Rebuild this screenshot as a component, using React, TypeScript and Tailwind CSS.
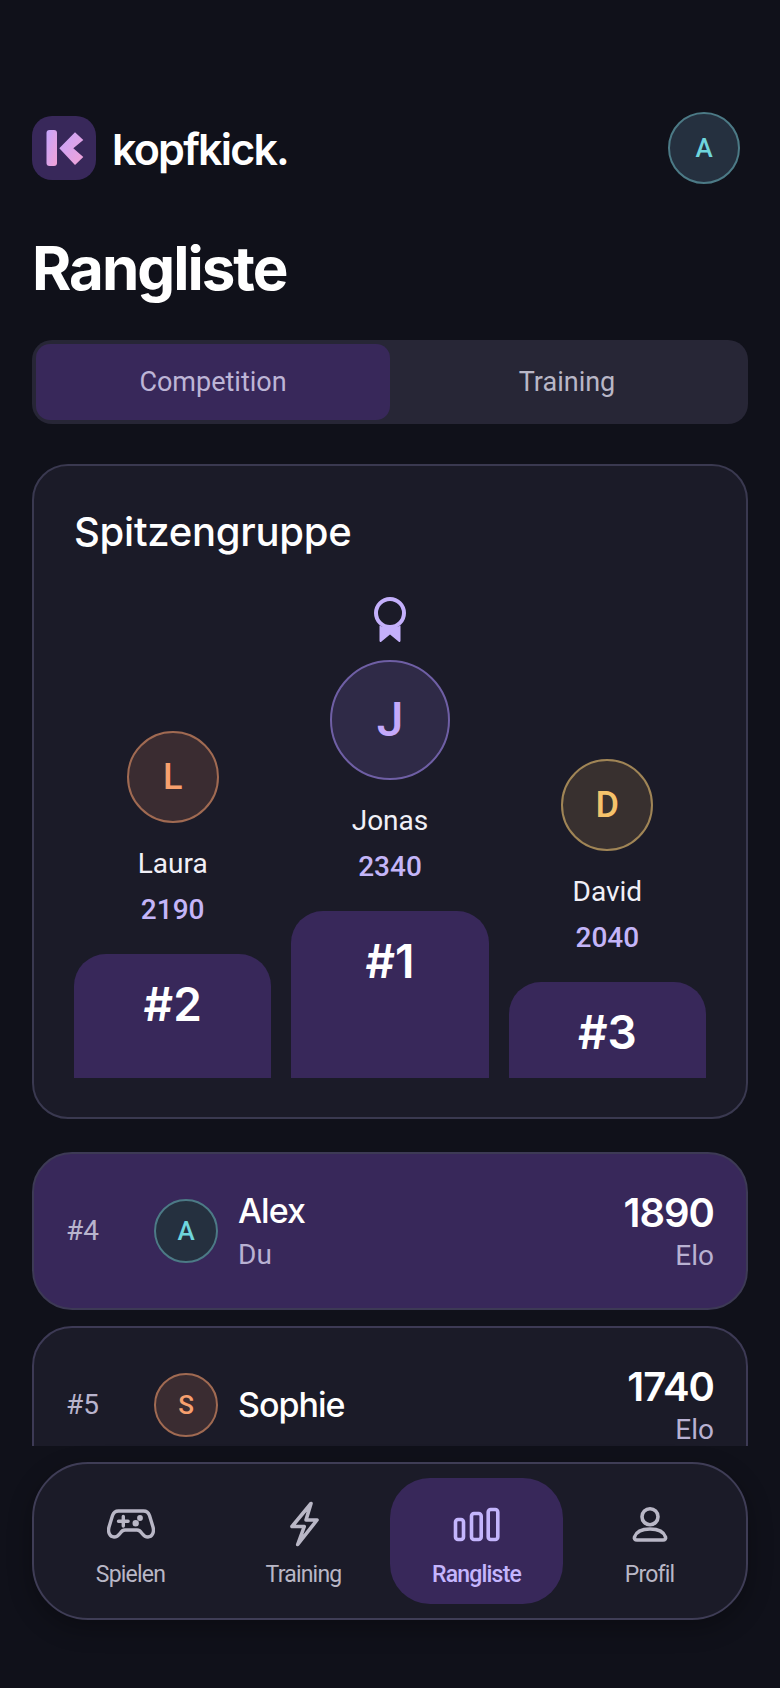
const display = { fontFamily: 'Inter, "Liberation Sans", sans-serif' };

interface Tone {
  ring: string;
}

const teal: Tone = { ring: 'bg-[#25303f] border-[#4c7a86] text-[#6fd5dc]' };
const orange: Tone = { ring: 'bg-[#3a2c31] border-[#a06a52] text-[#f7a06e]' };
const amber: Tone = { ring: 'bg-[#38302f] border-[#a08556] text-[#f5c26b]' };
const violet: Tone = { ring: 'bg-[#2f2a47] border-[#6f5fa5] text-[#c4a9fb]' };

function Avatar({ letter, tone, className }: { letter: string; tone: Tone; className: string }) {
  return (
    <div className={`flex shrink-0 items-center justify-center rounded-full border-2 font-medium ${tone.ring} ${className}`}>
      {letter}
    </div>
  );
}

function Logo() {
  return (
    <svg width="64" height="64" viewBox="0 0 64 64" className="shrink-0">
      <defs>
        <linearGradient id="logoMark" x1="0" y1="0" x2="1" y2="1">
          <stop offset="0" stopColor="#c4a5fd" />
          <stop offset="1" stopColor="#f2a2d6" />
        </linearGradient>
      </defs>
      <rect width="64" height="64" rx="20" fill="#38285a" />
      <rect x="14.5" y="14" width="10.5" height="36" rx="3" fill="url(#logoMark)" />
      <path d="M27.3 32.3 43 16.3l8.3 7.7-10 8.3 10 8.7L43 49z" fill="url(#logoMark)" />
    </svg>
  );
}

function Medal() {
  return (
    <svg width="34" height="46" viewBox="0 0 34 46" className="text-[#c4b0fb]">
      <circle cx="17" cy="16" r="14" fill="none" stroke="currentColor" strokeWidth="4" />
      <path d="M6.5 28.5 C10 31 24 31 27.5 28.5 L27.5 43.5 C27.5 45 26.5 45.5 25.5 44.5 L17 37.5 L8.5 44.5 C7.5 45.5 6.5 45 6.5 43.5 Z" fill="currentColor" />
    </svg>
  );
}

function PodiumColumn({ name, score, rank, letter, tone, avatarClass, barClass, icon }: {
  name: string;
  score: number;
  rank: number;
  letter: string;
  tone: Tone;
  avatarClass: string;
  barClass: string;
  icon?: boolean;
}) {
  return (
    <div className="flex flex-col items-center justify-end">
      {icon && <div className="mb-[17px] flex h-[46px]"><Medal /></div>}
      <Avatar letter={letter} tone={tone} className={avatarClass} />
      <div className="mt-[23px] text-[28px] leading-[36px] text-[#f1f0f7]">{name}</div>
      <div className="mt-[10px] text-[28px] font-medium leading-[36px] text-[#c4b5f8]">{score}</div>
      <div className={`mt-[26px] w-full rounded-t-[32px] bg-[#38285a] pt-[24px] text-center text-[46px] font-semibold leading-[52px] text-white ${barClass}`} style={display}>
        #{rank}
      </div>
    </div>
  );
}

function Row({ rank, letter, tone, name, sub, elo, active }: {
  rank: number;
  letter: string;
  tone: Tone;
  name: string;
  sub?: string;
  elo: number;
  active?: boolean;
}) {
  return (
    <div className={`flex h-[158px] shrink-0 items-center rounded-[40px] border-2 border-[#3d3a55] px-[32px] ${active ? 'bg-[#38285a]' : 'bg-[#1b1b28]'}`}>
      <div className="w-[88px] shrink-0 text-[28px] text-[#b9b4cd]">#{rank}</div>
      <Avatar letter={letter} tone={tone} className="h-[64px] w-[64px] text-[26px]" />
      <div className="ml-[20px] flex-1">
        <div className="text-[34px] font-medium leading-[44px] tracking-[-1px] text-white" style={display}>{name}</div>
        {sub && <div className="mt-[4px] text-[28px] leading-[36px] text-[#b9b1d2]">{sub}</div>}
      </div>
      <div className="text-right">
        <div className="text-[40px] font-semibold leading-[50px] tracking-[-1px] text-white" style={display}>{elo}</div>
        <div className="text-[28px] leading-[36px] text-[#b9b1d2]">Elo</div>
      </div>
    </div>
  );
}

function PadIcon() {
  return (
    <svg width="48" height="30" viewBox="0 0 48 30" fill="none" stroke="currentColor" strokeWidth="3.4" strokeLinecap="round" strokeLinejoin="round">
      <path d="M11.5 2H36.5C39.5 2 41.5 3.5 42.5 6.5L46 18C47.5 23.5 45 28 41 28C38.5 28 36.5 26.5 35 24.5C33.5 22 32 21 30 21H18C16 21 14.5 22 13 24.5C11.5 26.5 9.5 28 7 28C3 28 .5 23.5 2 18L5.5 6.5C6.5 3.5 8.5 2 11.5 2Z" />
      <path d="M11.5 12.3h9.6M16.3 7.5v9.6" />
      <circle cx="28.7" cy="14.3" r="1.5" fill="currentColor" />
      <circle cx="33" cy="9" r="1.2" fill="currentColor" />
    </svg>
  );
}

function BoltIcon() {
  return (
    <svg width="30" height="48" viewBox="0 0 30 48" fill="none" stroke="currentColor" strokeWidth="3.6" strokeLinejoin="round">
      <path d="M22 3.5 3 26.5H15.3L8.7 44.5 28 20H17z" />
    </svg>
  );
}

function BarsIcon() {
  return (
    <svg width="48" height="36" viewBox="0 0 48 36" fill="none" stroke="currentColor" strokeWidth="3.6">
      <rect x="2.5" y="13.5" width="8" height="20" rx="2.5" />
      <rect x="18.5" y="7.5" width="9.7" height="26" rx="2.5" />
      <rect x="35.2" y="3.5" width="9.6" height="30" rx="2.5" />
    </svg>
  );
}

function PersonIcon() {
  return (
    <svg width="36" height="38" viewBox="0 0 36 38" fill="none" stroke="currentColor" strokeWidth="3.6">
      <circle cx="18" cy="11.7" r="8" />
      <path d="M5 35H31C33 35 34 33.5 33.5 32C31.5 26 25.5 24 18 24C10.5 24 4.5 26 2.5 32C2 33.5 3 35 5 35Z" strokeLinejoin="round" />
    </svg>
  );
}

function NavItem({ label, active, children }: { label: string; active?: boolean; children: React.ReactNode }) {
  return (
    <div className={`flex flex-1 flex-col items-center rounded-[40px] ${active ? 'bg-[#38285a] text-[#c4b5fd]' : 'text-[#b9b7c6]'}`}>
      <div className="mt-[18px] flex h-[56px] items-center justify-center">{children}</div>
      <div className={`mt-[9px] text-[23px] leading-[28px] tracking-[-0.8px] ${active ? 'font-medium' : ''}`}>{label}</div>
    </div>
  );
}

export default function App() {
  return (
    <div className="flex h-[1688px] w-[780px] flex-col overflow-hidden bg-[#10111a]" style={{ fontFamily: 'Roboto, "Liberation Sans", sans-serif' }}>
      <div className="flex h-[1446px] flex-col overflow-hidden px-[32px] pt-[112px]">
        <header className="flex h-[72px] shrink-0 items-center justify-between">
          <div className="flex items-center gap-[16px]">
            <Logo />
            <span className="mt-[3px] text-[43px] font-semibold tracking-[-1.8px] text-white" style={display}>kopfkick.</span>
          </div>
          <Avatar letter="A" tone={teal} className="mr-[8px] h-[72px] w-[72px] text-[26px]" />
        </header>

        <h1 className="mt-[48px] shrink-0 text-[60px] font-bold leading-[72px] tracking-[-2px] text-white" style={display}>Rangliste</h1>

        <div className="mt-[36px] flex h-[84px] shrink-0 rounded-[20px] bg-[#272636] p-[4px] text-[27px]">
          <div className="flex flex-1 items-center justify-center rounded-[14px] bg-[#38285a] text-[#bdb5d6]">Competition</div>
          <div className="flex flex-1 items-center justify-center text-[#b9b7c6]">Training</div>
        </div>

        <section className="mt-[40px] h-[655px] shrink-0 rounded-[36px] border-2 border-[#3a3950] bg-[#1b1b28] px-[40px] pt-[41px]">
          <h2 className="text-[40px] font-medium leading-[50px] tracking-[-0.25px] text-white" style={display}>Spitzengruppe</h2>
          <div className="grid h-[521px] grid-cols-3 items-end gap-[20px]">
            <PodiumColumn name="Laura" score={2190} rank={2} letter="L" tone={orange} avatarClass="h-[92px] w-[92px] text-[36px]" barClass="h-[124px]" />
            <PodiumColumn name="Jonas" score={2340} rank={1} letter="J" tone={violet} avatarClass="h-[120px] w-[120px] text-[48px]" barClass="h-[167px]" icon />
            <PodiumColumn name="David" score={2040} rank={3} letter="D" tone={amber} avatarClass="h-[92px] w-[92px] text-[36px]" barClass="h-[96px]" />
          </div>
        </section>

        <div className="mt-[33px] flex shrink-0 flex-col gap-[16px]">
          <Row rank={4} letter="A" tone={teal} name="Alex" sub="Du" elo={1890} active />
          <Row rank={5} letter="S" tone={orange} name="Sophie" elo={1740} />
        </div>
      </div>

      <nav className="mx-[32px] mt-[16px] flex h-[158px] rounded-[56px] border-2 border-[#3f3d56] bg-[#1b1b28] px-[10px] py-[14px] shadow-[0_8px_24px_rgba(0,0,0,0.3)]">
        <NavItem label="Spielen"><PadIcon /></NavItem>
        <NavItem label="Training"><BoltIcon /></NavItem>
        <NavItem label="Rangliste" active><BarsIcon /></NavItem>
        <NavItem label="Profil"><PersonIcon /></NavItem>
      </nav>
    </div>
  );
}
